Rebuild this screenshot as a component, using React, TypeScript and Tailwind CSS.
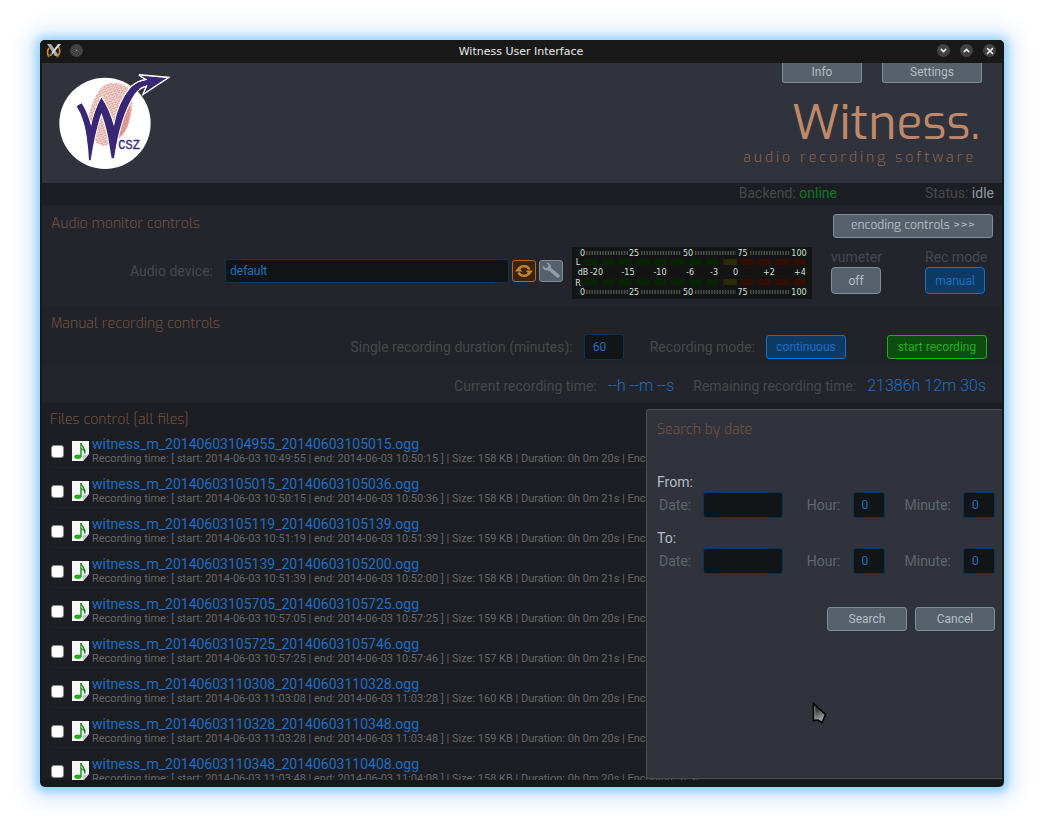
import type { ReactNode } from "react";
import { ChevronDown, ChevronUp, X } from "lucide-react";

type Recording = { name: string; start: string; end: string; size: string; length: string };

const recordings: Recording[] = [
  { name: "witness_m_20140603104955_20140603105015.ogg", start: "10:49:55", end: "10:50:15", size: "158", length: "20s" },
  { name: "witness_m_20140603105015_20140603105036.ogg", start: "10:50:15", end: "10:50:36", size: "158", length: "21s" },
  { name: "witness_m_20140603105119_20140603105139.ogg", start: "10:51:19", end: "10:51:39", size: "159", length: "20s" },
  { name: "witness_m_20140603105139_20140603105200.ogg", start: "10:51:39", end: "10:52:00", size: "158", length: "21s" },
  { name: "witness_m_20140603105705_20140603105725.ogg", start: "10:57:05", end: "10:57:25", size: "159", length: "20s" },
  { name: "witness_m_20140603105725_20140603105746.ogg", start: "10:57:25", end: "10:57:46", size: "157", length: "21s" },
  { name: "witness_m_20140603110308_20140603110328.ogg", start: "11:03:08", end: "11:03:28", size: "160", length: "20s" },
  { name: "witness_m_20140603110328_20140603110348.ogg", start: "11:03:28", end: "11:03:48", size: "159", length: "20s" },
  { name: "witness_m_20140603110348_20140603110408.ogg", start: "11:03:48", end: "11:04:08", size: "158", length: "20s" },
];

const greyButton = "border border-[#7d8e9b] bg-[#56616b] text-[#b4bec6] text-xs text-center";
const blueButton = "border border-[#1a6fc4] bg-[#0d3b66] text-[#1a6fc4] text-xs text-center";
const field = "border border-[#0a3358] bg-[#111518] text-[#1a6fc4] text-xs rounded-[3px]";

function Heading({ children }: { children: ReactNode }) {
  return <h2 className="pt-0.5 font-['Exo','Exo_2','Open_Sans',sans-serif] text-sm leading-4 font-light text-[#765444]">{children}</h2>;
}

function AppIcon() {
  return (
    <svg className="h-4 w-4" viewBox="0 0 16 16" aria-hidden="true">
      <path d="M3 5 Q0 9 3 14 M12 3 Q16 9 11 14" fill="none" stroke="#d98a1c" strokeWidth="1.6" />
      <path d="M1 1h4l8 12h-4z" fill="#a9acb0" />
      <path d="M15 1h-3L3 13h2z" fill="#d6d8da" />
      <path d="M2 14l4-4M10 14l3-1" stroke="#8a5a10" strokeWidth="1.5" />
    </svg>
  );
}

function Logo() {
  return (
    <svg className="h-[98px] w-28" viewBox="84 130 336 294" role="img" aria-label="Witness CSZ">
      <defs>
        <pattern id="ridges" width="11" height="8" patternUnits="userSpaceOnUse" patternTransform="rotate(-24)">
          <path d="M-1 3 Q3 0 6 3 T12 3 M-1 7 Q3 5 6 7 T12 7" fill="none" stroke="#cb5f52" strokeWidth="1.800" />
        </pattern>
      </defs>
      <circle cx="225" cy="281" r="137" fill="#fff" />
      <path d="M210 178 Q226 158 256 160 Q292 162 304 190 Q312 225 300 270 Q290 310 262 332 Q240 350 218 348 Q196 345 190 322 Q176 290 176 258 Q186 212 210 178z" fill="url(#ridges)" />
      <path d="M296 205 Q308 240 292 290 Q282 312 262 330 Q280 270 296 205z" fill="#cf6a5e" opacity="0.5" />
      <path
        d="M140 230 L155 221 Q174 252 184 292 Q192 245 214 204 Q238 238 252 290 Q264 218 302 174 Q324 152 350 150 L327 136 L414 144 L341 192 L351 168 Q326 174 313 194 Q270 260 252 386 L245 386 L234 320 Q226 280 214 250 Q194 310 182 392 L177 392 Q172 310 161 278 Q153 250 140 230z"
        fill="#392775"
        stroke="#fff"
        strokeWidth="6"
        paintOrder="stroke"
      />
      <path d="M340 192 L351 168 Q338 171 328 178 M300 172 Q322 152 350 150 L327 136 L414 144 L341 192" fill="none" stroke="#fff" strokeWidth="3" />
      <path
        d="M148 226 Q172 262 180 340 Q192 262 214 220 Q238 268 249 340 Q266 238 308 182 Q328 160 356 158"
        fill="none"
        stroke="#392775"
        strokeWidth="13"
      />
      <text x="265" y="359" fontFamily="Liberation Mono, monospace" fontSize="36" fill="#392775" stroke="#392775" strokeWidth="1">CSZ</text>
    </svg>
  );
}

function FileIcon() {
  return (
    <svg className="h-5 w-[17px] shrink-0" viewBox="0 0 17 20" aria-hidden="true">
      <path d="M0 0h17v13l-6 7H0z" fill="#f4f5f4" />
      <path d="M17 13l-6 7v-6z" fill="#c9cbc9" />
      <path d="M9 2v14" stroke="#168316" strokeWidth="1.3" />
      <path d="M9 2C9.500 6 14 7 13 12.500C12.500 9.500 11 8 9 7.500" fill="none" stroke="#168316" strokeWidth="1.2" />
      <ellipse cx="5.900" cy="15.800" rx="3.600" ry="2.200" fill="#23b01f" />
    </svg>
  );
}

function RefreshIcon() {
  return (
    <svg className="h-[18px] w-[18px]" viewBox="0 0 18 18" aria-hidden="true">
      <path d="M3.500 7.500A6 5.700 0 0 1 14.500 7.500M14.500 10.500A6 5.700 0 0 1 3.500 10.500" fill="none" stroke="#c98228" strokeWidth="2.400" />
      <path d="M10.800 8.500h7.200l-3.600 4.500zM0 9.500h7.200L3.600 5z" fill="#c98228" />
    </svg>
  );
}

function WrenchIcon() {
  return (
    <svg className="h-[18px] w-[18px]" viewBox="0 0 18 18" aria-hidden="true">
      <path d="M0.500 3.500L3.500 6L6 5.500L6.500 3L4 0.800C7 0.500 9.500 2.500 9 6L17.500 13C18.500 14.500 16.500 16.500 15 15.500L7 8.500C3.500 9 0 7 0.500 3.500z" fill="#8fa0ad" />
    </svg>
  );
}

const percentMarks: [number, string][] = [[10.5, "0"], [62, "25"], [116, "50"], [170.5, "75"], [227, "100"]];
const decibelMarks: [number, string][] = [[11, "dB"], [24.5, "-20"], [56, "-15"], [88, "-10"], [118, "-6"], [142, "-3"], [163.5, "0"], [197, "+2"], [228, "+4"]];
const tickGroups = [[14, 56], [69, 109], [123, 164], [178, 218]];

function VuMeter() {
  const ledColor = (i: number) => (i < 8 ? "#042404" : i === 8 ? "#2e2a05" : "#340d06");
  return (
    <svg className="h-[52px] w-60 shrink-0" viewBox="0 0 240 52" role="img" aria-label="VU meter">
      <rect width="240" height="52" fill="#131413" />
      {[4, 43].map((y) =>
        tickGroups.map(([from, to]) => (
          <path key={`${y}-${from}`} d={`M${from} ${y + 2}H${to}`} stroke="#4a504d" strokeWidth="4" strokeDasharray="1.500 1.200" />
        )),
      )}
      {[12, 32].map((y) =>
        Array.from({ length: 13 }, (_, i) => (
          <rect key={`${y}-${i}`} x={12 + i * 17.4} y={y} width="13.500" height="6" fill={ledColor(i)} />
        )),
      )}
      <g fill="#cfe0dc" fontFamily="DejaVu Sans, sans-serif" fontSize="8" textAnchor="middle">
        {[9, 48].map((y) => percentMarks.map(([x, t]) => <text key={`${y}-${t}`} x={x} y={y}>{t}</text>))}
        {decibelMarks.map(([x, t]) => <text key={t} x={x} y="28">{t}</text>)}
        <text x="6" y="18">L</text>
        <text x="6" y="39">R</text>
      </g>
    </svg>
  );
}

function WindowButton({ label, children }: { label: string; children: ReactNode }) {
  return (
    <button aria-label={label} className="grid h-[13px] w-[13px] place-items-center rounded-full bg-[#434343] text-[#eeeeee]">
      {children}
    </button>
  );
}

function SearchGroup({ title }: { title: string }) {
  return (
    <fieldset className="text-sm text-[#5f676e]">
      <legend className="block h-[18px] leading-[18px] text-[#b5bcc2]">{title}:</legend>
      <div className="flex items-center pt-px pl-0.5">
        <label className="flex items-center gap-3">
          Date:
          <input type="text" className={`${field} h-[26px] w-20 px-2`} />
        </label>
        <label className="ml-auto flex items-center gap-3">
          Hour:
          <input type="text" defaultValue="0" className={`${field} h-[26px] w-8 px-2`} />
        </label>
        <label className="ml-5 flex items-center gap-3">
          Minute:
          <input type="text" defaultValue="0" className={`${field} h-[26px] w-8 px-2`} />
        </label>
      </div>
    </fieldset>
  );
}

export default function App() {
  return (
    <div className="h-screen bg-white p-10 font-['Roboto',sans-serif]">
      <div className="flex h-full flex-col overflow-hidden rounded-[5px] bg-[#17181a] shadow-[0_1px_9px_4px_#8fd3fb,0_1px_22px_12px_#dceafd]">
        <header className="flex h-[23px] shrink-0 items-center bg-[#191919] pr-2 pb-0.5 pl-1.5">
          <div className="flex flex-1 items-center gap-2">
            <AppIcon />
            <WindowButton label="Window menu">
              <span className="h-px w-px bg-white" />
            </WindowButton>
          </div>
          <span className="pt-0.5 font-['DejaVu_Sans',sans-serif] text-[11px] leading-4 text-[#e8e8e8]">Witness User Interface</span>
          <div className="flex flex-1 justify-end gap-2.5">
            <WindowButton label="Minimize"><ChevronDown size={9} strokeWidth={4} /></WindowButton>
            <WindowButton label="Maximize"><ChevronUp size={9} strokeWidth={4} /></WindowButton>
            <WindowButton label="Close"><X size={10} strokeWidth={4} /></WindowButton>
          </div>
        </header>

        <main className="mx-0.5 mb-[7px] flex min-h-0 flex-1 flex-col overflow-hidden bg-[#1d1e23]">
          <section className="flex h-[120px] shrink-0 justify-between bg-[#31333c] pr-5 pl-4">
            <div className="pt-2.5">
              <Logo />
            </div>
            <div className="flex flex-col items-end">
              <nav className="flex gap-5">
                <button className={`${greyButton} h-5 w-20 rounded-b-[3px] border-t-0 pb-0.5`}>Info</button>
                <button className={`${greyButton} h-5 w-[100px] rounded-b-[3px] border-t-0 pb-0.5`}>Settings</button>
              </nav>
              <h1 className="mt-3 mr-0.5 font-['Exo','Exo_2','Open_Sans',sans-serif] text-5xl leading-[57px] font-normal text-[#c08a6a]">Witness.</h1>
              <p className="mr-1.5 font-['Exo','Exo_2','Open_Sans',sans-serif] text-sm leading-3 font-light tracking-[3px] text-[#8d6752]">
                audio recording software
              </p>
            </div>
          </section>

          <div className="flex h-[23px] shrink-0 justify-end gap-[88px] pr-2 text-sm leading-5 text-[#444a4b]">
            <span>Backend: <span className="text-[#0a7a1c]">online</span></span>
            <span>Status: <span className="text-[#8c979f]">idle</span></span>
          </div>

          <section className="shrink-0 bg-[#24252c] pt-2 pr-[9px] pb-[7px] pl-[9px] text-sm text-[#444a4b]">
            <div className="flex items-start justify-between">
              <Heading>Audio monitor controls</Heading>
              <button className={`${greyButton} h-6 w-40 rounded-[3px] pb-0.5 font-['Exo','Exo_2','Open_Sans',sans-serif]`}>encoding controls &gt;&gt;&gt;</button>
            </div>
            <div className="flex items-center pt-[9px] pr-2">
              <div className="flex min-w-0 flex-1 items-center pb-1">
                <label htmlFor="device" className="w-[162px] text-right">Audio device:</label>
                <select id="device" className={`${field} ml-3 h-6 min-w-0 flex-1 appearance-none px-1`}>
                  <option>default</option>
                </select>
                <button aria-label="Refresh devices" className="ml-[3px] grid h-[22px] w-6 place-items-center rounded-[3px] border border-[#b5651d] bg-[#3a2410]">
                  <RefreshIcon />
                </button>
                <button aria-label="Device settings" className="mr-[9px] ml-[3px] grid h-[22px] w-6 place-items-center rounded-[3px] border border-[#7d8e9b] bg-[#56616b]">
                  <WrenchIcon />
                </button>
              </div>
              <VuMeter />
              <div className="ml-[19px] w-[60px] self-start">
                <label htmlFor="vumeter" className="block">vumeter</label>
                <button id="vumeter" className={`${greyButton} block h-[27px] w-[50px] rounded`}>off</button>
              </div>
              <div className="ml-[34px] w-[60px] self-start whitespace-nowrap">
                <label htmlFor="recmode" className="block">Rec mode</label>
                <button id="recmode" className={`${blueButton} block h-[27px] w-full rounded`}>manual</button>
              </div>
            </div>
          </section>

          <section className="shrink-0 bg-[#222329] pt-2 pr-[15px] pb-[5px] pl-[9px] text-sm text-[#444a4b]">
            <Heading>Manual recording controls</Heading>
            <div className="mt-0.5 flex items-center justify-end">
              <label htmlFor="duration">Single recording duration (minutes):</label>
              <input id="duration" type="text" defaultValue="60" className={`${field} ml-[11px] h-[26px] w-10 px-2`} />
              <label htmlFor="mode" className="ml-[26px]">Recording mode:</label>
              <button id="mode" className={`${blueButton} ml-[11px] h-6 w-20 rounded-[3px]`}>continuous</button>
              <button className="ml-[41px] h-6 w-[100px] rounded-[3px] border border-[#1fae1f] bg-[#0d4d10] text-xs text-[#1fae1f]">start recording</button>
            </div>
          </section>

          <div className="flex h-[37px] shrink-0 items-center justify-end bg-[#24252c] pt-1 pr-4 text-sm text-[#444a4b]">
            <span>Current recording time:</span>
            <span className="ml-[11px] text-base font-light text-[#1a6fc4]">--h --m --s</span>
            <span className="ml-[19px]">Remaining recording time:</span>
            <span className="ml-[11px] text-base font-light text-[#1a6fc4]">21386h 12m 30s</span>
          </div>

          <section className="relative flex min-h-0 flex-1 flex-col pt-2 pl-2">
            <Heading>Files control [all files]</Heading>
            <ul className="min-h-0 flex-1 overflow-hidden">
              {recordings.map((r) => (
                <li key={r.name} className="flex h-10 items-center border-b border-[#222328]">
                  <input type="checkbox" aria-label={r.name} className="mx-px mt-2 h-[13px] w-[13px] shrink-0 appearance-none rounded-[3px] border border-[#8c8c8c] bg-white" />
                  <span className="mt-1.5 mr-[3px] ml-[7px] flex"><FileIcon /></span>
                  <div className="pt-1 whitespace-nowrap">
                    <a href="#recording" className="block text-sm leading-[18px] text-[#1a6fc4]">{r.name}</a>
                    <p className="text-[11px] leading-3 text-[#65676a]">
                      Recording time: [ start: 2014-06-03 {r.start} | end: 2014-06-03 {r.end} ] | Size: {r.size} KB | Duration: 0h 0m {r.length} | Encoding: Test
                    </p>
                  </div>
                </li>
              ))}
            </ul>

            <form className="absolute top-[7px] right-0 bottom-px w-[356px] rounded-l-[3px] border border-r-0 border-[#4a4c50] bg-[#31333c] pt-2.5 pr-[7px] pl-2.5">
              <Heading>Search by date</Heading>
              <div className="mt-[35px] flex flex-col gap-[11px]">
                <SearchGroup title="From" />
                <SearchGroup title="To" />
              </div>
              <div className="mt-[33px] flex justify-end gap-2">
                <button type="button" className={`${greyButton} h-6 w-20 rounded-[3px]`}>Search</button>
                <button type="button" className={`${greyButton} h-6 w-20 rounded-[3px]`}>Cancel</button>
              </div>
              <svg className="absolute top-[292px] left-[165px] h-[22px] w-[15px]" viewBox="0 0 15 22" aria-hidden="true">
                <defs>
                  <linearGradient id="pointer" x1="0" y1="0" x2="0.300" y2="1">
                    <stop offset="0.300" stopColor="#2b2b2b" />
                    <stop offset="1" stopColor="#b0b0b0" />
                  </linearGradient>
                </defs>
                <path d="M1.500 1.500V18.500L6 18L10 20.500L13.500 12.500z" fill="url(#pointer)" stroke="#000" strokeWidth="1.600" />
                <path d="M2.800 4V17" stroke="#8a8a8a" />
              </svg>
            </form>
          </section>
        </main>
      </div>
    </div>
  );
}
